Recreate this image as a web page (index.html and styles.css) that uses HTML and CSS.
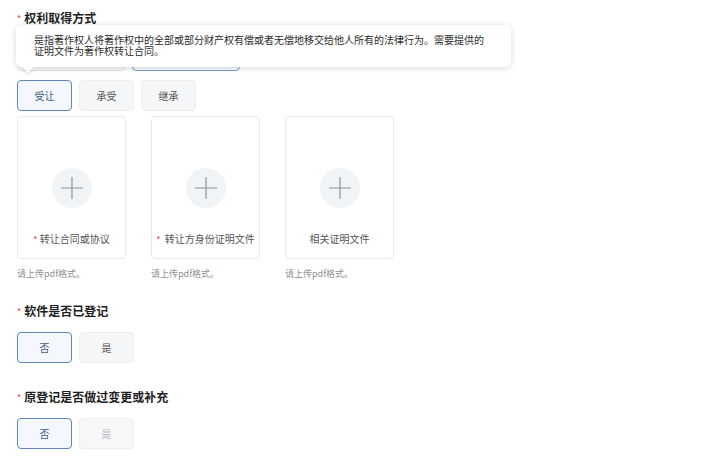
FILE: index.html
```html
<!DOCTYPE html>
<html lang="zh">
<head>
<meta charset="utf-8">
<link rel="stylesheet" href="styles.css">
</head>
<body>
<div class="page">
  <section class="field first">
    <div class="title"><span class="req">*</span>权利取得方式</div>
    <div class="hidden-row">
      <div class="ghost"></div>
      <div class="ghost active"></div>
    </div>
    <div class="tooltip">
      <p class="tip-line">是指著作权人将著作权中的全部或部分财产权有偿或者无偿地移交给他人所有的法律行为。需要提供的</p>
      <p class="tip-line">证明文件为著作权转让合同。</p>
      <span class="arrow"></span>
    </div>
    <div class="options">
      <div class="opt selected">受让</div>
      <div class="opt">承受</div>
      <div class="opt">继承</div>
    </div>
    <div class="uploads">
      <div class="upload">
        <div class="card">
          <div class="plus"><svg width="22" height="22" viewBox="0 0 22 22"><path d="M11 0V22M0 11H22" stroke="#8c949e" stroke-width="1.2" fill="none"/></svg></div>
          <div class="label"><span class="req small">*</span> 转让合同或协议</div>
        </div>
        <div class="help">请上传pdf格式。</div>
      </div>
      <div class="upload">
        <div class="card">
          <div class="plus"><svg width="22" height="22" viewBox="0 0 22 22"><path d="M11 0V22M0 11H22" stroke="#8c949e" stroke-width="1.2" fill="none"/></svg></div>
          <div class="label"><span class="req small">*</span>&nbsp; 转让方身份证明文件</div>
        </div>
        <div class="help">请上传pdf格式。</div>
      </div>
      <div class="upload">
        <div class="card">
          <div class="plus"><svg width="22" height="22" viewBox="0 0 22 22"><path d="M11 0V22M0 11H22" stroke="#8c949e" stroke-width="1.2" fill="none"/></svg></div>
          <div class="label">相关证明文件</div>
        </div>
        <div class="help">请上传pdf格式。</div>
      </div>
    </div>
  </section>

  <section class="field second">
    <div class="title"><span class="req">*</span>软件是否已登记</div>
    <div class="options">
      <div class="opt selected">否</div>
      <div class="opt">是</div>
    </div>
  </section>

  <section class="field third">
    <div class="title"><span class="req">*</span>原登记是否做过变更或补充</div>
    <div class="options">
      <div class="opt selected">否</div>
      <div class="opt disabled">是</div>
    </div>
  </section>
</div>
</body>
</html>
```

FILE: styles.css
```css
* { box-sizing: border-box; }
html, body { margin: 0; padding: 0; background: #fff; }
body {
  font-family: "Noto Sans CJK SC", "Microsoft YaHei", "Noto Sans", sans-serif;
  color: #333;
}
.page {
  padding: 9px 0 0 17px;
  width: 721px;
  height: 473px;
  overflow: hidden;
}
.field { position: relative; }
.title {
  font-size: 12px;
  line-height: 16px;
  font-weight: 700;
  color: #1f1f1f;
  display: flex;
  align-items: center;
}
.req {
  color: #e8424a;
  font-size: 9px;
  font-weight: 400;
  margin-right: 3px;
  margin-top: 2px;
}
.req.small { font-size: 9px; margin: 0; }

.hidden-row {
  display: flex;
  gap: 7px;
  margin-top: 14px;
}
.ghost {
  width: 108px;
  height: 30px;
  border: 1px solid #e4e6e9;
  border-radius: 4px;
  background: #f7f8f9;
}
.ghost.active { border-color: #7f9fc8; background: #f6f9fc; }

.tooltip {
  position: absolute;
  left: -1px;
  top: 16px;
  width: 495px;
  height: 42px;
  background: #fff;
  border-radius: 5px;
  box-shadow: 0 1px 6px rgba(0, 0, 0, 0.16);
  padding: 9px 0 0 18px;
  font-size: 10px;
  color: #2b2b2b;
}
.tip-line {
  margin: 0;
  line-height: 11px;
  white-space: nowrap;
}
.arrow {
  position: absolute;
  left: 8px;
  bottom: -4px;
  width: 8px;
  height: 8px;
  background: #fff;
  transform: rotate(45deg);
  box-shadow: 2px 2px 3px rgba(0, 0, 0, 0.08);
}

.options {
  display: flex;
  gap: 7px;
  margin-top: 9px;
}
.field.second .options, .field.third .options { margin-top: 12px; }
.opt {
  width: 55px;
  height: 31px;
  border: 1px solid #eceef1;
  border-radius: 4px;
  background: #f5f6f8;
  font-size: 10px;
  color: #555;
  display: flex;
  align-items: center;
  justify-content: center;
}
.opt.selected {
  border-color: #5f87ba;
  background: #f4f8fc;
  color: #3d5d84;
}
.opt.disabled { color: #b8bcc2; background: #f6f7f8; }

.uploads {
  display: flex;
  gap: 25px;
  margin-top: 5px;
}
.card {
  width: 109px;
  height: 143px;
  border: 1px solid #e8e9eb;
  border-radius: 4px;
  background: #fff;
  display: flex;
  flex-direction: column;
  align-items: center;
  padding-top: 51px;
}
.plus {
  width: 40px;
  height: 40px;
  border-radius: 50%;
  background: #f1f4f6;
  display: flex;
  align-items: center;
  justify-content: center;
}
.label {
  margin-top: 24px;
  font-size: 10px;
  line-height: 14px;
  color: #555;
  white-space: nowrap;
}
.help {
  margin-top: 9px;
  font-size: 9px;
  line-height: 12px;
  color: #8f8f8f;
}
.field.second { margin-top: 22px; }
.field.third { margin-top: 25px; }
```
